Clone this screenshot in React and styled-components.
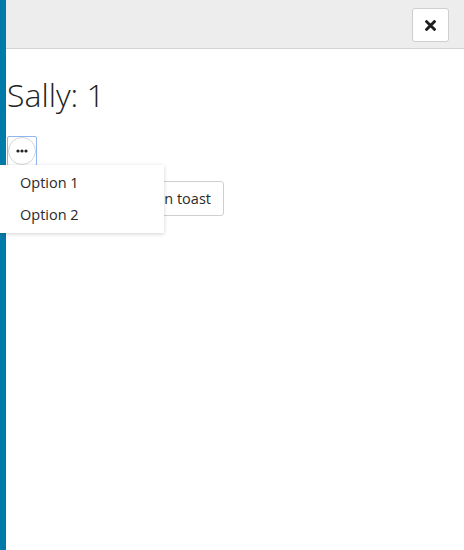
import React, { useState } from 'react';
import styled, { createGlobalStyle } from 'styled-components';

const GlobalStyle = createGlobalStyle`
html, body {
  margin: 0;
  padding: 0;
  background: #fff;
  font-family: "Open Sans", "Liberation Sans", sans-serif;
  color: #252525;
}
`

const Page = styled.div`
display: flex;
height: 550px;
width: 464px;
overflow: hidden;
`
const SideBar = styled.div`
width: 6px;
flex: none;
background-color: #007ba9;
`
const Main = styled.div`
flex: 1;
display: flex;
flex-direction: column;
`
const Header = styled.header`
height: 49px;
background-color: #ededed;
border-bottom: 1px solid #d3d3d3;
display: flex;
align-items: flex-start;
justify-content: flex-end;
padding: 8px 15px 0 0;
box-sizing: border-box;
`
const CloseButton = styled.button`
width: 37px;
height: 34px;
background: #fff;
border: 1px solid #cfcfcf;
border-radius: 3px;
display: flex;
align-items: center;
justify-content: center;
padding: 0;
cursor: pointer;
`
const Content = styled.main`
padding: 0 0 0 1px;
display: flex;
flex-direction: column;
align-items: flex-start;
`
const Title = styled.h1`
font-weight: 300;
font-size: 32px;
margin: 23px 0 0 0;
line-height: 46px;
color: #222;
`
const MenuAnchor = styled.div`
position: relative;
margin-top: 18px;
`
const Focus = styled.div`
border: 1px solid #8fb6f0;
border-radius: 2px;
width: 30px;
height: 30px;
box-sizing: border-box;
display: flex;
align-items: center;
justify-content: center;
`
const DotsButton = styled.button`
width: 28px;
height: 28px;
border-radius: 50%;
border: 1px solid #d6d6d6;
background: #fff;
padding: 0;
display: flex;
align-items: center;
justify-content: center;
cursor: pointer;
`
const Menu = styled.ul`
position: absolute;
top: 29px;
left: -7px;
width: 164px;
margin: 0;
padding: 2px 0;
list-style: none;
background: #fff;
box-shadow: 0 1px 4px rgba(0, 0, 0, 0.18);
z-index: 2;
`
const MenuItem = styled.li`
font-size: 14.5px;
line-height: 32px;
padding: 0 20px;
color: #2a2a2a;
cursor: pointer;
`
const ButtonRow = styled.div`
display: flex;
gap: 8px;
margin-top: 15px;
`
const Button = styled.button`
font-family: inherit;
font-size: 14.5px;
color: #2a2a2a;
background: #fff;
border: 1px solid #cfcfcf;
border-radius: 3px;
height: 35px;
padding: 0 12px;
min-width: ${p => p.$minWidth || 0}px;
cursor: pointer;
`

const CloseIcon = () => (
  <svg width="11" height="11" viewBox="0 0 10 10">
    <path d="M1.5 1.5 L8.5 8.5 M8.5 1.5 L1.5 8.5" stroke="#1e1e1e" strokeWidth="2.6" strokeLinecap="square" />
  </svg>
)

const DotsIcon = () => (
  <svg width="12" height="4" viewBox="0 0 12 4">
    <circle cx="2" cy="2" r="1.6" fill="#222" />
    <circle cx="6" cy="2" r="1.6" fill="#222" />
    <circle cx="10" cy="2" r="1.6" fill="#222" />
  </svg>
)

const App = () => {
  const [open] = useState(true);

  return (
    <Page>
      <GlobalStyle />
      <SideBar />
      <Main>
        <Header>
          <CloseButton aria-label="Close"><CloseIcon /></CloseButton>
        </Header>
        <Content>
          <Title>Sally: 1</Title>
          <MenuAnchor>
            <Focus>
              <DotsButton aria-label="More"><DotsIcon /></DotsButton>
            </Focus>
            {open && (
              <Menu>
                <MenuItem>Option 1</MenuItem>
                <MenuItem>Option 2</MenuItem>
              </Menu>
            )}
          </MenuAnchor>
          <ButtonRow>
            <Button $minWidth={108}>Increment</Button>
            <Button>Open toast</Button>
          </ButtonRow>
        </Content>
      </Main>
    </Page>
  )
}

export default App
